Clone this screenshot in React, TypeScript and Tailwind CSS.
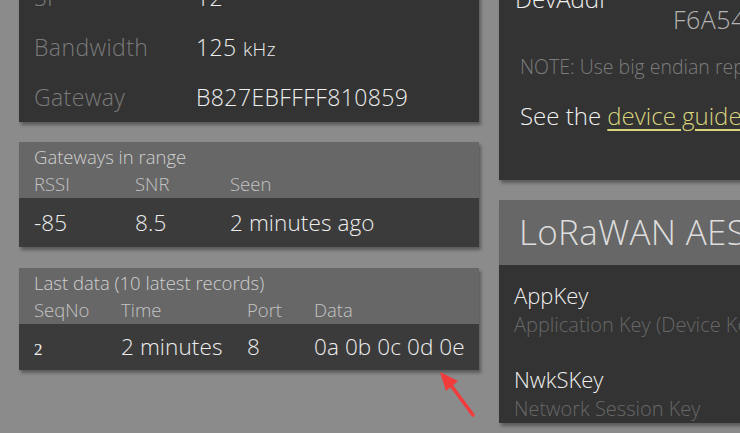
import React from 'react'

const font = { fontFamily: '"Open Sans", "Liberation Sans", sans-serif' }

function InfoRow({ label, value }: { label: string; value: React.ReactNode }) {
  return (
    <div className="flex h-[50px] items-center text-[23px] tracking-[0.4px]">
      <span className="w-[162px] text-[#7a7a7a]">{label}</span>
      <span className="text-[#eeeeee]">{value}</span>
    </div>
  )
}

function TableCard({
  title,
  cols,
  row,
  widths,
  bodyH,
}: {
  title: string
  cols: string[]
  row: React.ReactNode[]
  widths: string[]
  bodyH: string
}) {
  return (
    <div className="bg-[#3b3b3b] shadow-[2px_3px_3px_rgba(0,0,0,0.35)]">
      <div className="h-[56px] bg-[#676767] px-[15px] pt-[3px]">
        <div className="text-[18.5px] leading-[23px] text-[#d0d0d0]">{title}</div>
        <div className="mt-[4px] flex text-[18.5px] leading-[23px] text-[#c4c4c4]">
          {cols.map((c, i) => (
            <span key={c} className={`shrink-0 ${widths[i]}`}>{c}</span>
          ))}
        </div>
      </div>
      <div className={`flex items-center whitespace-nowrap px-[15px] text-[22.5px] tracking-[0.1px] text-[#eeeeee] ${bodyH}`}>
        {row.map((c, i) => (
          <span key={i} className={`shrink-0 ${widths[i]}`}>{c}</span>
        ))}
      </div>
    </div>
  )
}

export default function App() {
  return (
    <div className="relative h-[433px] w-[740px] overflow-hidden bg-[#8b8b8b] font-light" style={font}>
      <div className="flex gap-[20px] pl-[19px]">
        {/* left column */}
        <div className="flex w-[460px] shrink-0 flex-col gap-[20px]">
          <div className="-mt-[41px] bg-[#333333] px-[15px] pt-[13px] shadow-[2px_3px_3px_rgba(0,0,0,0.35)]">
            <InfoRow label="SF" value="12" />
            <InfoRow label="Bandwidth" value={<>125 <span className="text-[19px]">kHz</span></>} />
            <InfoRow label="Gateway" value="B827EBFFFF810859" />
          </div>

          <TableCard
            title="Gateways in range"
            cols={['RSSI', 'SNR', 'Seen']}
            row={['-85', '8.5', '2 minutes ago']}
            widths={['w-[101px]', 'w-[95px]', '']}
            bodyH="h-[49px]"
          />

          <div className="mt-[1px]">
            <TableCard
              title="Last data (10 latest records)"
              cols={['SeqNo', 'Time', 'Port', 'Data']}
              row={[
                <span className="text-[17px]" style={{ fontFamily: '"Liberation Serif", serif' }}>2</span>,
                '2 minutes',
                '8',
                '0a 0b 0c 0d 0e',
              ]}
              widths={['w-[87px]', 'w-[126px]', 'w-[67px]', '']}
              bodyH="h-[46px]"
            />
          </div>
        </div>

        {/* right column */}
        <div className="flex w-[300px] shrink-0 flex-col gap-[20px]">
          <div className="-mt-[20px] h-[200px] bg-[#333333] pl-[16px] shadow-[2px_3px_3px_rgba(0,0,0,0.35)]">
            <div className="flex">
              <span className="mt-[1px] w-[158px] text-[24px] text-[#eeeeee]">DevAddr</span>
              <span className="mt-[21px] text-[25px] tracking-[0.5px] text-[#b4b4b4]">F6A54A3B</span>
            </div>
            <div className="mt-[13px] whitespace-nowrap pl-[5px] text-[19.5px] text-[#7c7c7c]">
              NOTE: Use big endian representation
            </div>
            <div className="mt-[17px] whitespace-nowrap pl-[5px] text-[24px] text-[#f0f0f0]">
              See the <a className="text-[#d8d47c] underline underline-offset-[4px]">device guide</a>
            </div>
          </div>

          <div className="bg-[#333333] shadow-[2px_3px_3px_rgba(0,0,0,0.35)]">
            <div className="flex h-[65px] items-center whitespace-nowrap bg-[#676767] pl-[20px] text-[35px] tracking-[0.3px] text-[#dddddd]">
              LoRaWAN AES Keys
            </div>
            <div className="whitespace-nowrap pl-[15px] pt-[16px]">
              <div className="text-[22px] leading-[29px] text-[#f0f0f0]">AppKey</div>
              <div className="text-[20px] leading-[29px] text-[#676767]">Application Key (Device Key)</div>
              <div className="mt-[26px] text-[22px] leading-[29px] text-[#f0f0f0]">NwkSKey</div>
              <div className="text-[20px] leading-[29px] text-[#676767]">Network Session Key</div>
            </div>
          </div>
        </div>
      </div>

      {/* annotation arrow */}
      <svg className="absolute left-[436px] top-[368px]" width="44" height="52" viewBox="0 0 44 52">
        <path d="M37 47 L14 16" stroke="#f23b3b" strokeWidth="3.5" strokeLinecap="round" />
        <path d="M4 4 L22 13 L10 23 Z" fill="#f23b3b" />
      </svg>
    </div>
  )
}
